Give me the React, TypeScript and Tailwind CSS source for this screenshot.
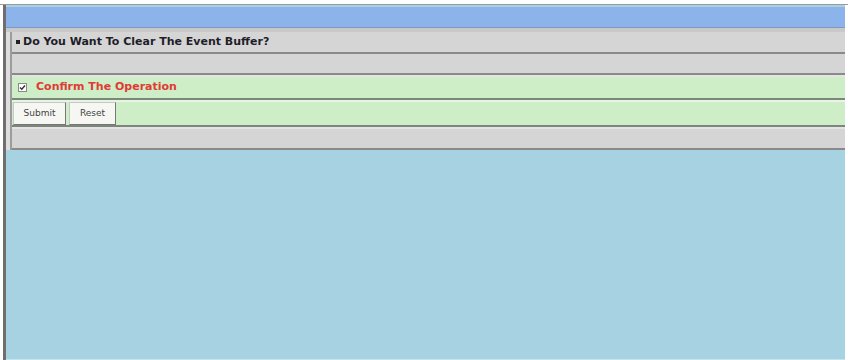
import React, { useState } from 'react';

const font = { fontFamily: '"DejaVu Sans", Verdana, sans-serif' };

const App: React.FC = () => {
  const [confirmed, setConfirmed] = useState(true);

  return (
    <div className="w-[848px] h-[360px] bg-white overflow-hidden flex flex-col" style={font}>
      {/* top strip */}
      <div className="h-[5px] shrink-0 bg-white border-b border-[#9a9a9a]" />
      <div className="flex-1 flex pl-[3px] pr-[3px]">
        <div className="flex-1 flex flex-col border-l-[3px] border-[#6f6f6f] bg-[#a7d2e1]">
          {/* header bar */}
          <div className="h-[21px] mt-[2px] bg-[#8db4ea] border-b border-[#7f98c4]" />
          <div className="h-[4px] bg-[#c9c9c9]" />

          {/* form panel */}
          <div className="bg-[#dedede] pl-[4px]">
            <div className="border-l-2 border-[#9c9c9c] flex flex-col">
              <div className="h-[22px] bg-[#d5d5d5] border-b-2 border-[#8a8a8a] flex items-center pl-[4px]">
                <span className="w-[4px] h-[4px] bg-[#222] mr-[3px]" />
                <span className="text-[11px] font-bold text-[#1e1e2a]">Do You Want To Clear The Event Buffer?</span>
              </div>
              <div className="h-[21px] bg-[#d5d5d5] border-b-2 border-[#8a8a8a]" />
              <div className="h-[2px] bg-[#e4e4e4]" />
              <div className="h-[23px] bg-[#cdeec6] border-b-2 border-[#7d867b] flex items-center pl-[6px]">
                <label className="flex items-center cursor-pointer">
                  <input
                    type="checkbox"
                    checked={confirmed}
                    onChange={(e) => setConfirmed(e.target.checked)}
                    className="sr-only"
                  />
                  <span className="w-[9px] h-[9px] bg-white border border-[#8a8a8a] flex items-center justify-center">
                    {confirmed && (
                      <svg width="7" height="7" viewBox="0 0 7 7">
                        <path d="M1 3.5 L2.8 5.3 L6 1.5" stroke="#333" strokeWidth="1.4" fill="none" />
                      </svg>
                    )}
                  </span>
                  <span className="ml-[9px] text-[11px] font-bold text-[#e03a36]">Confirm The Operation</span>
                </label>
              </div>
              <div className="h-[2px] bg-[#e6f5e2]" />
              <div className="h-[25px] bg-[#cdeec6] border-b-2 border-[#7d867b] flex items-center pl-[1px] gap-[3px]">
                <button className="h-[23px] w-[53px] bg-[#f6f6f2] border border-[#c8c8c8] border-r-[#777] border-b-[#777] text-[9px] text-[#444]">
                  Submit
                </button>
                <button className="h-[23px] w-[47px] bg-[#f6f6f2] border border-[#c8c8c8] border-r-[#777] border-b-[#777] text-[9px] text-[#444]">
                  Reset
                </button>
              </div>
              <div className="h-[2px] bg-[#e4e4e4]" />
              <div className="h-[21px] bg-[#d5d5d5] border-b-2 border-[#8a8a8a]" />
            </div>
          </div>
          <div className="flex-1 border-b border-[#c5e4ea]" />
        </div>
      </div>
    </div>
  );
};

export default App;
